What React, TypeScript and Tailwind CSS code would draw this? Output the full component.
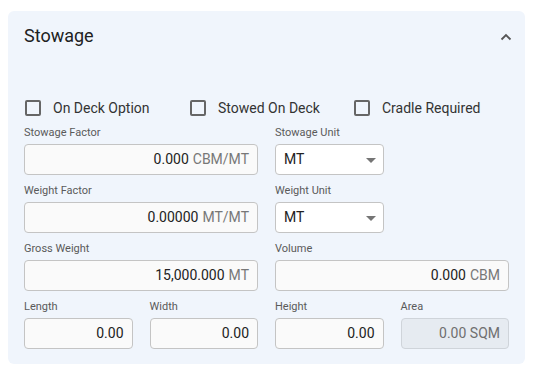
import React from 'react';

const font = { fontFamily: 'Roboto, "Liberation Sans", sans-serif' };

const Checkbox = ({ label }: { label: string }) => (
  <label className="flex items-center">
    <span className="ml-[1px] w-4 h-4 border-2 border-[#666] rounded-[2px] bg-transparent" />
    <span className="ml-[12px] text-[14px] text-[#333]">{label}</span>
  </label>
);

const NumberField = ({
  label,
  value,
  unit,
  disabled,
  className = '',
}: {
  label: string;
  value: string;
  unit?: string;
  disabled?: boolean;
  className?: string;
}) => (
  <div className={className}>
    <div className="text-[11px] leading-[14px] text-[#5a5a5a] mb-[4px]">{label}</div>
    <div
      className={`h-[31px] rounded-[4px] border flex items-center justify-end pr-2 text-[14px] ${
        disabled ? 'bg-[#e6ebf1] border-[#cfd4da] text-[#6f6f6f]' : 'bg-[#fafafa] border-[#c4c4c4] text-[#222]'
      }`}
    >
      <span>{value}</span>
      {unit && <span className={`ml-1 ${disabled ? 'text-[#6f6f6f]' : 'text-[#777]'}`}>{unit}</span>}
    </div>
  </div>
);

const SelectField = ({ label, value }: { label: string; value: string }) => (
  <div>
    <div className="text-[11px] leading-[14px] text-[#5a5a5a] mb-[4px]">{label}</div>
    <div className="h-[31px] rounded-[4px] border border-[#c4c4c4] bg-white flex items-center justify-between pl-2 pr-[7px] text-[14px] text-[#222]">
      <span>{value}</span>
      <svg width="10" height="5" viewBox="0 0 10 5" className="mt-[1px]">
        <polygon points="0,0 10,0 5,5" fill="#757575" />
      </svg>
    </div>
  </div>
);

export default function App() {
  return (
    <div className="w-[533px] h-[375px] bg-white pt-[11px] pl-[8px]" style={font}>
      <div className="w-[517px] h-[353px] bg-[#f0f5fc] rounded-[6px] px-4">
        {/* header */}
        <div className="flex items-center justify-between pt-[13px] h-[37px]">
          <h2 className="text-[18px] leading-[24px] font-normal text-[#212121]">Stowage</h2>
          <svg width="12" height="8" viewBox="0 0 12 8" className="mr-[-3px] mt-[1px]">
            <polyline points="1.5,6.5 6,2 10.5,6.5" fill="none" stroke="#555" strokeWidth="1.8" />
          </svg>
        </div>

        {/* checkboxes */}
        <div className="grid grid-cols-[165px_164px_auto] h-[24px] mt-[48px] items-center">
          <Checkbox label="On Deck Option" />
          <Checkbox label="Stowed On Deck" />
          <Checkbox label="Cradle Required" />
        </div>

        {/* fields */}
        <div className="grid grid-cols-4 gap-x-[17px] gap-y-[9px] mt-[6px] w-[485px]">
          <NumberField className="col-span-2" label="Stowage Factor" value="0.000" unit="CBM/MT" />
          <div className="col-span-2">
            <div className="w-[109px]">
              <SelectField label="Stowage Unit" value="MT" />
            </div>
          </div>

          <NumberField className="col-span-2" label="Weight Factor" value="0.00000" unit="MT/MT" />
          <div className="col-span-2">
            <div className="w-[109px]">
              <SelectField label="Weight Unit" value="MT" />
            </div>
          </div>

          <NumberField className="col-span-2" label="Gross Weight" value="15,000.000" unit="MT" />
          <NumberField className="col-span-2" label="Volume" value="0.000" unit="CBM" />

          <NumberField label="Length" value="0.00" />
          <NumberField label="Width" value="0.00" />
          <NumberField label="Height" value="0.00" />
          <NumberField label="Area" value="0.00 SQM" disabled />
        </div>
      </div>
    </div>
  );
}
